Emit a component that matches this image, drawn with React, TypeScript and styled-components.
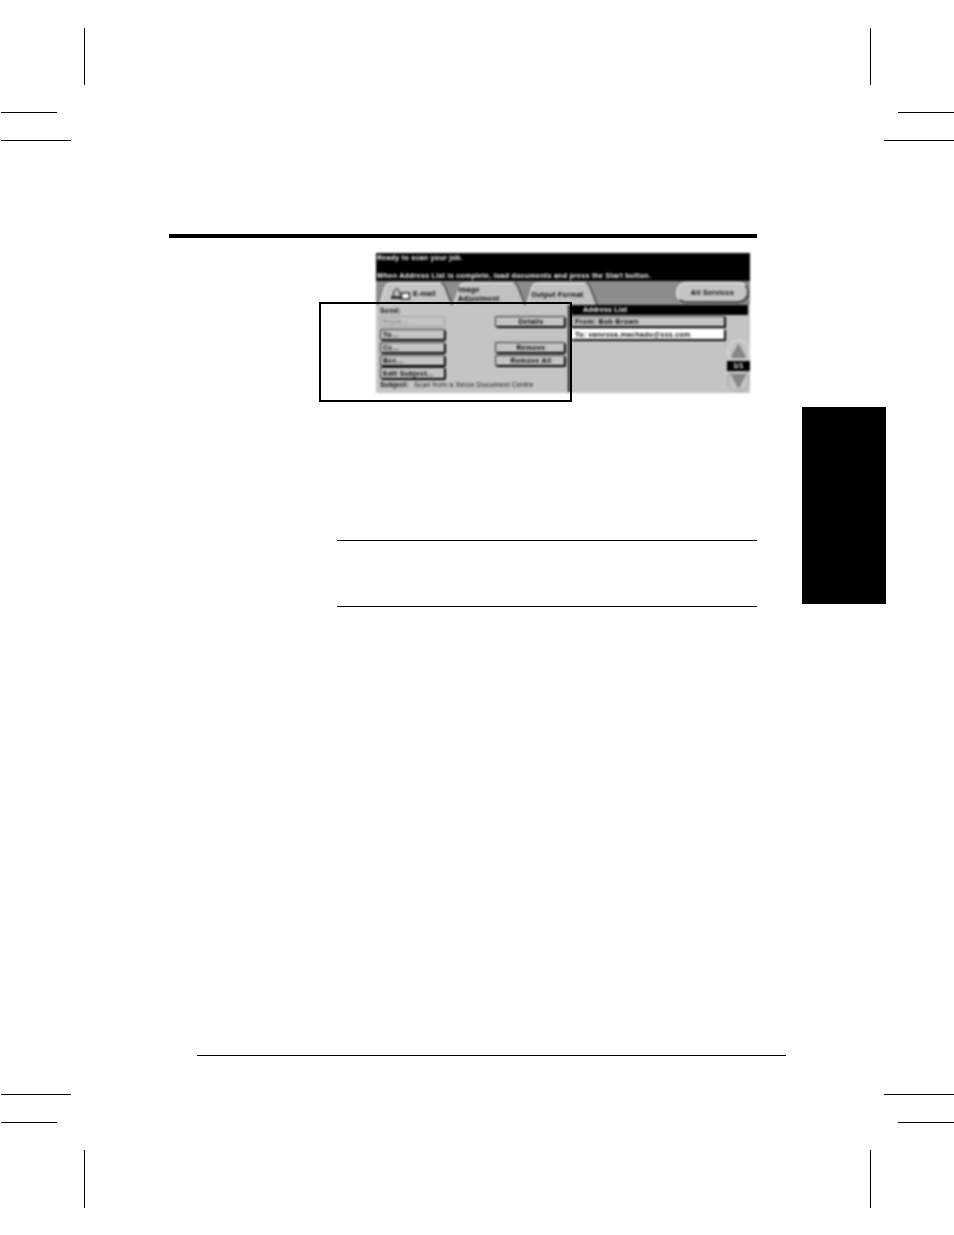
import { createGlobalStyle, styled } from "styled-components";

const GlobalStyle = createGlobalStyle`
  html, body {
    margin: 0;
    padding: 0;
    background: #fff;
    font-family: "Liberation Sans", Arial, sans-serif;
  }
`;

const Sheet = styled.div`
  position: relative;
  width: 954px;
  height: 1235px;
  overflow: hidden;
  background: #fff;
`;

const CropMark = styled.div<{ $x: number; $y: number; $w: number; $h: number }>`
  position: absolute;
  left: ${(p) => p.$x}px;
  top: ${(p) => p.$y}px;
  width: ${(p) => p.$w}px;
  height: ${(p) => p.$h}px;
  background: #000;
`;

const PageRow = styled.div`
  display: flex;
  align-items: flex-start;
  padding: 234px 0 0 169px;
`;

const Column = styled.main`
  width: 588px;
`;

const HeavyRule = styled.div`
  height: 4px;
  background: #000;
`;

const ScreenWrap = styled.div`
  position: relative;
  width: 374px;
  height: 140px;
  margin: 15px 0 0 207px;
`;

const Screen = styled.div`
  width: 374px;
  height: 140px;
  display: flex;
  flex-direction: column;
  background: #c4c4c4;
  overflow: hidden;
  font-size: 7px;
  font-weight: 700;
  letter-spacing: 0.3px;
  color: #000;
  line-height: 1;
  filter: blur(0.8px);
`;

const Message = styled.div`
  height: 28px;
  flex: none;
  box-sizing: border-box;
  padding: 1px 1px 2px;
  display: flex;
  flex-direction: column;
  justify-content: space-between;
  background: #000;
  color: #fff;
`;

const TabBar = styled.div`
  height: 24px;
  flex: none;
  box-sizing: border-box;
  display: flex;
  align-items: flex-end;
  padding: 0 1px 0 3px;
  background: #8c8c8c;
`;

const Tab = styled.div<{ $w: number; $active?: boolean }>`
  position: relative;
  width: ${(p) => p.$w}px;
  height: 23px;
  flex: none;
  display: flex;
  align-items: center;
  box-sizing: border-box;
  padding-left: ${(p) => (p.$active ? 9 : 5)}px;
  padding-top: ${(p) => (p.$active ? 0 : 1)}px;
  gap: 3px;
`;

const TabShape = styled.svg`
  position: absolute;
  inset: 0;
  width: 100%;
  height: 100%;
`;

const TabLabel = styled.span`
  position: relative;
  line-height: 9px;
`;

const TabIcon = styled.svg`
  position: relative;
  width: 22px;
  height: 14px;
  flex: none;
`;

const ServicesButton = styled.div`
  width: 73px;
  height: 21px;
  margin: 0 0 1px auto;
  align-self: center;
  box-sizing: border-box;
  display: flex;
  align-items: center;
  justify-content: center;
  border-radius: 11px;
  background: #c4c4c4;
  border: 1px solid #111;
  border-top-color: #fff;
  border-left-color: #fff;
  box-shadow: inset -1px -1px 0 #777;
`;

const Body = styled.div`
  flex: 1;
  display: flex;
  min-height: 0;
`;

const LeftPanel = styled.div`
  width: 194px;
  flex: none;
  box-sizing: border-box;
  padding: 1px 0 0 4px;
  margin-bottom: 1px;
  border-right: 2px solid #111;
  display: grid;
  grid-template-columns: 65px 70px;
  column-gap: 50px;
  grid-template-rows: 8px 11px 11px 11px 11px 11px auto;
  row-gap: 2px;
  align-content: start;
`;

const SendLabel = styled.div`
  grid-column: 1 / -1;
  line-height: 9px;
`;

const ActionButton = styled.div<{ $disabled?: boolean; $center?: boolean; $lift?: boolean }>`
  box-sizing: border-box;
  display: flex;
  align-items: center;
  justify-content: ${(p) => (p.$center ? "center" : "flex-start")};
  padding-left: 2px;
  margin-top: ${(p) => (p.$lift ? -1 : 0)}px;
  background: #c4c4c4;
  border-radius: 2px;
  border: 1px solid ${(p) => (p.$disabled ? "#999" : "#000")};
  border-top-color: ${(p) => (p.$disabled ? "#a0a0a0" : "#333")};
  border-left-color: ${(p) => (p.$disabled ? "#a0a0a0" : "#333")};
  box-shadow: ${(p) => (p.$disabled ? "none" : "1px 1px 0 #000")};
  color: ${(p) => (p.$disabled ? "#8c8c8c" : "#000")};
`;

const EmptyCell = styled.div``;

const SubjectLine = styled.div`
  grid-column: 1 / -1;
  white-space: nowrap;
  letter-spacing: 0.15px;
  span {
    font-weight: 400;
    margin-left: 3px;
    color: #111;
  }
`;

const RightPanel = styled.div`
  flex: 1;
  padding: 0 2px 0 1px;
  display: flex;
  flex-direction: column;
`;

const ListTitle = styled.div`
  height: 10px;
  flex: none;
  padding-left: 12px;
  background: #000;
  color: #fff;
  line-height: 10px;
  letter-spacing: 0.15px;
`;

const ListArea = styled.div`
  flex: 1;
  display: flex;
  justify-content: space-between;
`;

const Entries = styled.div`
  width: 154px;
  padding-top: 1px;
  display: flex;
  flex-direction: column;
  gap: 2px;
`;

const Entry = styled.div<{ $selected?: boolean }>`
  height: 11px;
  box-sizing: border-box;
  display: flex;
  align-items: center;
  padding-left: 3px;
  background: ${(p) => (p.$selected ? "#fff" : "#c4c4c4")};
  border: 1px solid #111;
  border-top-color: ${(p) => (p.$selected ? "#fff" : "#444")};
  border-left-color: ${(p) => (p.$selected ? "#fff" : "#444")};
  box-shadow: 1px 1px 0 #000;
`;

const Scroller = styled.div`
  width: 23px;
  margin: 25px -2px 0 0;
  display: flex;
  flex-direction: column;
  align-items: stretch;
`;

const ArrowBox = styled.svg`
  width: 23px;
  height: 22px;
  display: block;
`;

const PageCount = styled.div`
  height: 10px;
  margin: -1px 0;
  position: relative;
  background: #000;
  color: #fff;
  text-align: center;
  line-height: 10px;
`;

const ScreenOutline = styled.div`
  position: absolute;
  left: -57px;
  top: 49px;
  width: 253px;
  height: 100px;
  box-sizing: border-box;
  border: 2px solid #000;
`;

const NoteRule = styled.div<{ $gap: number }>`
  height: 1px;
  width: 420px;
  margin: ${(p) => p.$gap}px 0 0 168px;
  background: #000;
`;

const ChapterTab = styled.aside`
  width: 84px;
  height: 197px;
  flex: none;
  margin: 173px 0 0 45px;
  background: #000;
`;

const FooterRule = styled.div`
  width: 589px;
  height: 1px;
  margin: 448px 0 0 197px;
  background: #000;
`;

const marks = [
  [84, 28, 1, 57],
  [870, 28, 1, 57],
  [1, 112, 56, 1],
  [1, 140, 70, 1],
  [898, 112, 56, 1],
  [884, 140, 70, 1],
  [1, 1094, 70, 1],
  [1, 1122, 56, 1],
  [884, 1094, 70, 1],
  [898, 1122, 56, 1],
  [84, 1150, 1, 58],
  [870, 1150, 1, 58],
];

function TabOutline({ active, w }: { active?: boolean; w: number }) {
  const d = `M1 23 L6 5 Q7 1 12 1 L${w - 12} 1 Q${w - 9} 1 ${w - 8} 5 L${w - 1} 23 Z`;
  return (
    <TabShape viewBox={`0 0 ${w} 23`}>
      <path d={d} fill={active ? "#c4c4c4" : "#c0c0c0"} />
      <path d={`M1 23 L6 5 Q7 1 12 1 L${w - 12} 1`} fill="none" stroke="#fff" strokeWidth="1" />
      <path d={`M${w - 12} 1 Q${w - 9} 1 ${w - 8} 5 L${w - 1} 23`} fill="none" stroke="#111" strokeWidth="1" />
    </TabShape>
  );
}

function Arrow({ up }: { up?: boolean }) {
  return (
    <ArrowBox viewBox="0 0 23 22">
      <rect x="1" y="0.5" width="21" height="21" rx="9" fill="#c4c4c4" stroke={up ? "#e4e4e4" : "#a0a0a0"} />
      <path d={up ? "M11.5 3 L19.5 18 L3.5 18 Z" : "M3.5 4 L19.5 4 L11.5 19 Z"} fill="#868686" />
    </ArrowBox>
  );
}

export default function App() {
  return (
    <>
      <GlobalStyle />
      <Sheet>
        {marks.map(([x, y, w, h], i) => (
          <CropMark key={i} $x={x} $y={y} $w={w} $h={h} />
        ))}
        <PageRow>
          <Column>
            <HeavyRule />
            <ScreenWrap>
              <Screen>
                <Message>
                  <div>Ready to scan your job.</div>
                  <div>When Address List is complete, load documents and press the Start button.</div>
                </Message>
                <TabBar>
                  <Tab $w={74} $active>
                    <TabOutline w={74} active />
                    <TabIcon viewBox="0 0 22 14">
                      <path d="M5 11 L6 4 Q7.5 2 9 2 Q10.5 2 11 4 L12 8" fill="none" stroke="#111" strokeWidth="1" />
                      <rect x="3" y="9" width="10" height="3" fill="#333" />
                      <rect x="13.5" y="6" width="8" height="6" fill="#fff" stroke="#000" strokeWidth="1.2" />
                    </TabIcon>
                    <TabLabel>E-mail</TabLabel>
                  </Tab>
                  <Tab $w={73}>
                    <TabOutline w={73} />
                    <TabLabel>
                      Image
                      <br />
                      Adjustment
                    </TabLabel>
                  </Tab>
                  <Tab $w={72}>
                    <TabOutline w={72} />
                    <TabLabel>Output Format</TabLabel>
                  </Tab>
                  <ServicesButton>All Services</ServicesButton>
                </TabBar>
                <Body>
                  <LeftPanel>
                    <SendLabel>Send:</SendLabel>
                    <ActionButton $disabled>From...</ActionButton>
                    <ActionButton $center>Details</ActionButton>
                    <ActionButton>To...</ActionButton>
                    <EmptyCell />
                    <ActionButton>Cc...</ActionButton>
                    <ActionButton $center>Remove</ActionButton>
                    <ActionButton>Bcc...</ActionButton>
                    <ActionButton $center>Remove All</ActionButton>
                    <ActionButton $lift>Edit Subject...</ActionButton>
                    <EmptyCell />
                    <SubjectLine>
                      Subject:<span> Scan from a Xerox Document Centre</span>
                    </SubjectLine>
                  </LeftPanel>
                  <RightPanel>
                    <ListTitle>Address List</ListTitle>
                    <ListArea>
                      <Entries>
                        <Entry>From: Bob Brown</Entry>
                        <Entry $selected>To: vanessa.machado@sss.com</Entry>
                      </Entries>
                      <Scroller>
                        <Arrow up />
                        <PageCount>1/1</PageCount>
                        <Arrow />
                      </Scroller>
                    </ListArea>
                  </RightPanel>
                </Body>
              </Screen>
              <ScreenOutline />
            </ScreenWrap>
            <NoteRule $gap={147} />
            <NoteRule $gap={65} />
          </Column>
          <ChapterTab />
        </PageRow>
        <FooterRule />
      </Sheet>
    </>
  );
}
